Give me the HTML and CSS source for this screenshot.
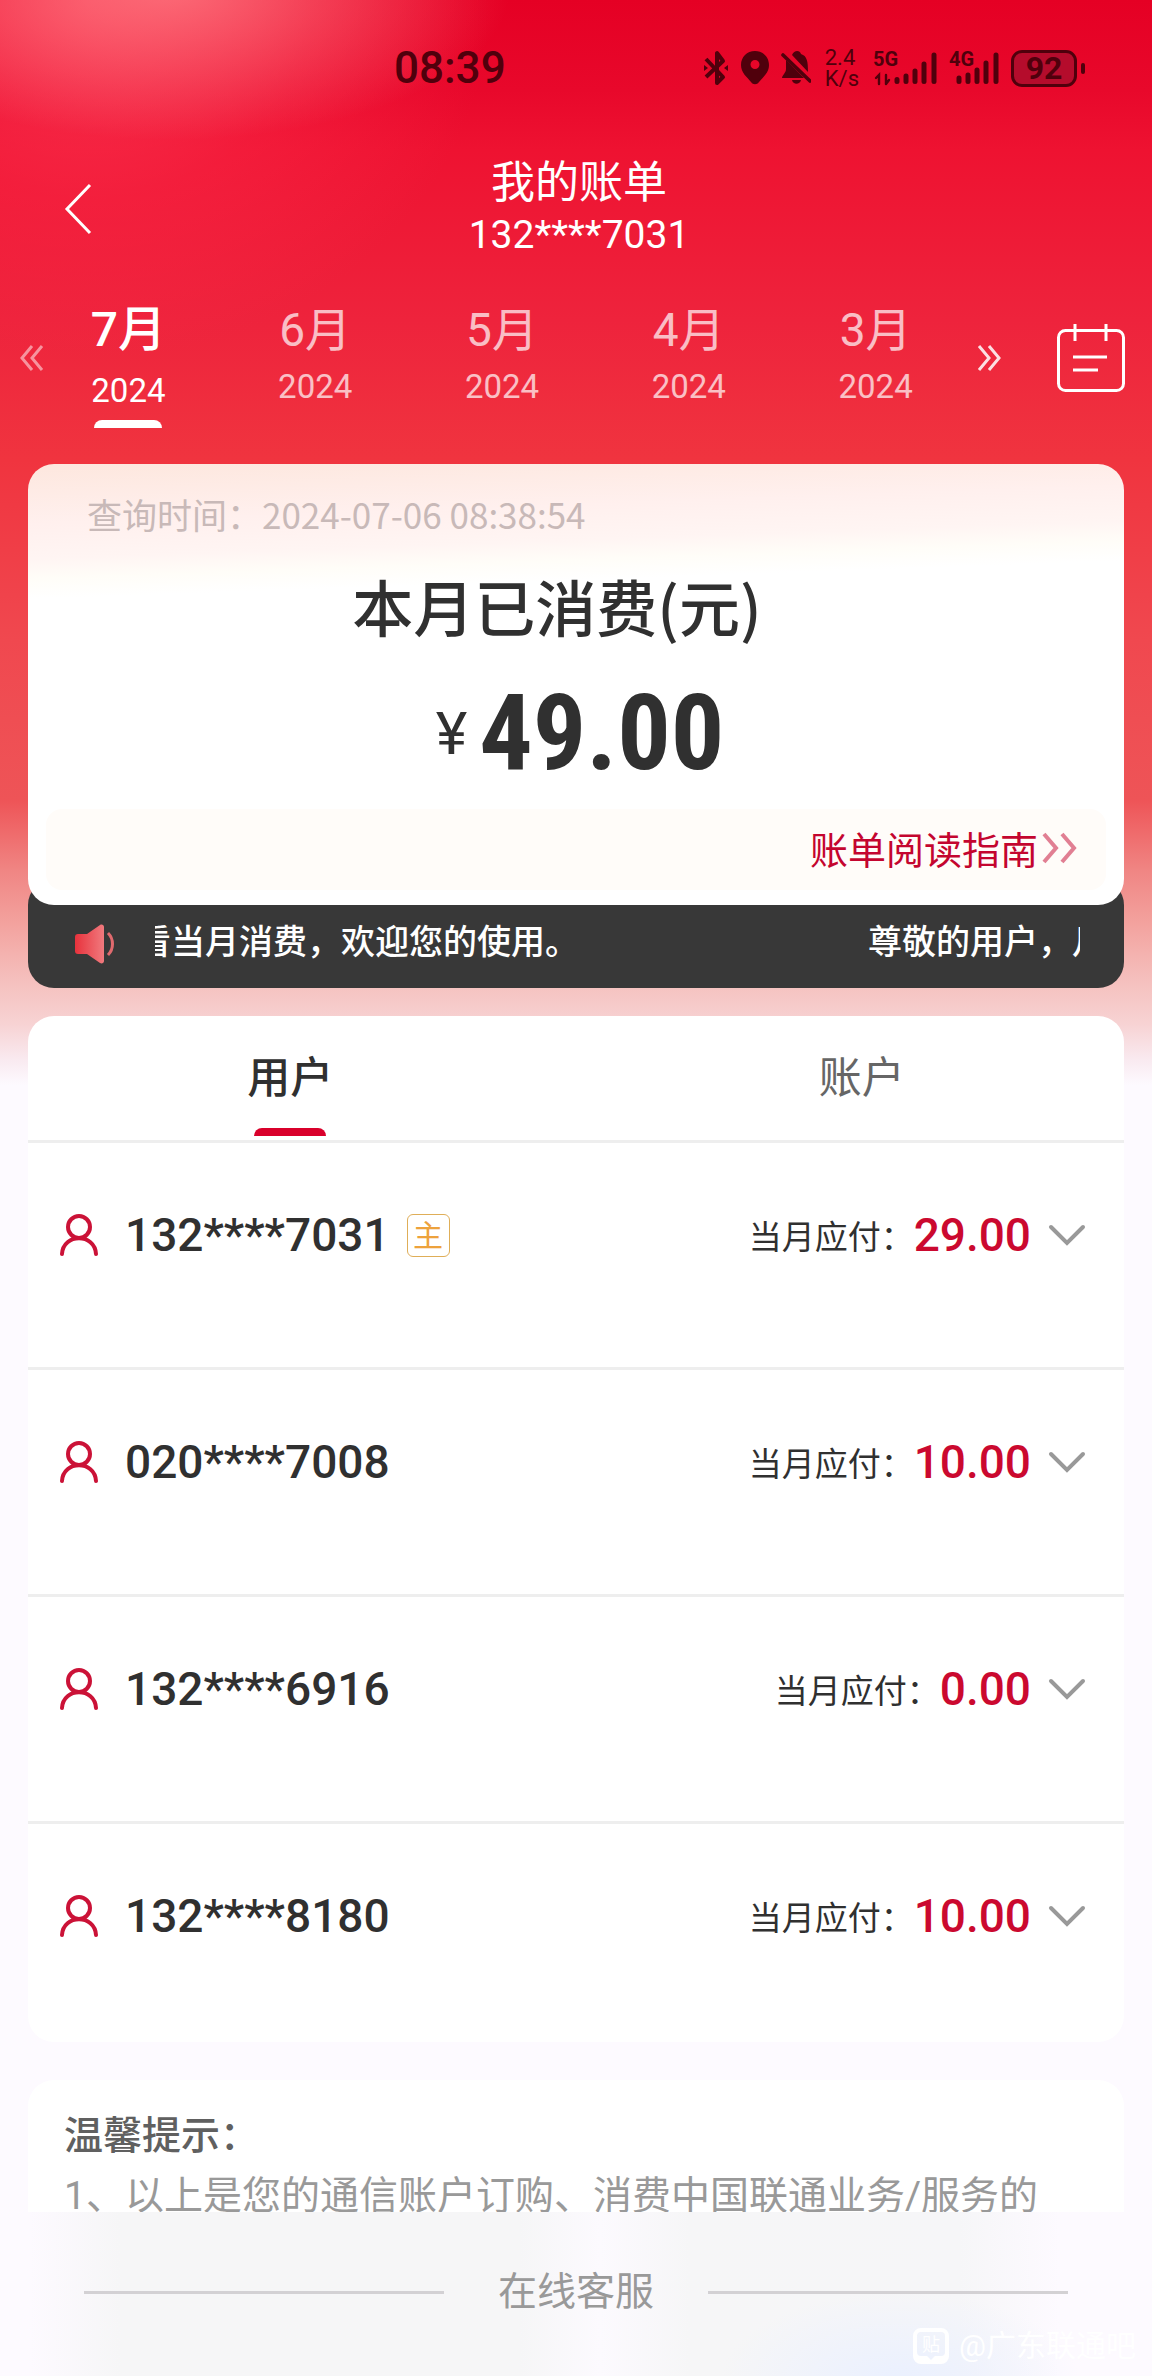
FILE: index.html
```html
<!DOCTYPE html>
<html lang="zh-CN">
<head>
<meta charset="utf-8">
<meta name="viewport" content="width=device-width, initial-scale=1">
<title>我的账单</title>
<link rel="stylesheet" href="styles.css">
</head>
<body>
<svg class="defs" aria-hidden="true">
  <symbol id="user" viewBox="0 0 38 42"><circle cx="19" cy="13" r="11"/><path d="M2 40C3 19 35 19 36 40"/></symbol>
  <symbol id="down" viewBox="0 0 38 22"><path d="M3 3l16 16L35 3"/></symbol>
</svg>
<div class="page">
  <div class="status">
    <span class="clock">08:39</span>
    <div class="status-icons">
      <svg width="26" height="36" viewBox="0 0 26 36" fill="none" stroke="currentColor" stroke-width="4" stroke-linejoin="round"><path d="M3 27L20 11l-6-8v30l6-6L3 9"/><path d="M1 15v6l4-3zM25 15v6l-4-3z" fill="currentColor" stroke="none"/></svg>
      <svg width="28" height="34" viewBox="0 0 28 34" fill="currentColor"><path fill-rule="evenodd" d="M14 0C6 0 0 6 0 14c0 8 6 12 10 17 2 3 6 3 8 0 4-5 10-9 10-17C28 6 22 0 14 0zm0 9a4.500 4.500 0 1 1 0 9 4.500 4.500 0 0 1 0-9z"/></svg>
      <svg width="30" height="34" viewBox="0 0 30 34" fill="currentColor"><path d="M11 4C13-1 19-1 20 3c6 2 7 7 7 18zM5 9l18 18H1c0-3 4-5 4-9zM11 29h9c-1 5-8 5-9 0z"/><path d="M2 4l27 26" stroke="currentColor" stroke-width="3.600" stroke-linecap="round"/></svg>
      <span class="speed">2.4<br>K/s</span>
      <span class="signal"><span class="net">5G</span><svg width="64" height="36" viewBox="0 0 64 36" fill="none" stroke="currentColor" stroke-width="5" stroke-linecap="round"><path d="M24 29.500v2M33 26v5.500M42 21v10.500M51 14v17.500M61 5v26.500"/><path d="M3 28l3-3v9M13 34v-9M13 34l3-4" stroke-width="2.400"/></svg></span>
      <span class="signal"><span class="net">4G</span><svg width="50" height="36" viewBox="0 0 50 36" fill="none" stroke="currentColor" stroke-width="5" stroke-linecap="round"><path d="M10 28v3.500M19 25v6.500M28 20v11.500M37 13v18.500M47 5v26.500"/></svg></span>
      <span class="battery">92</span>
    </div>
  </div>

  <header class="nav">
    <button class="icon-btn back" aria-label="返回"><svg width="28" height="52" viewBox="0 0 28 52" fill="none" stroke="currentColor" stroke-width="3"><path d="M26 2L3 26l23 24"/></svg></button>
    <div class="nav-title"><h1>我的账单</h1><p>132****7031</p></div>
  </header>

  <nav class="months">
    <button class="icon-btn prev" aria-label="更晚月份"><svg width="24" height="28" viewBox="0 0 24 28" fill="none" stroke="currentColor" stroke-width="3"><path d="M12 2L2 14l10 12M22 2L12 14l10 12"/></svg></button>
    <div class="month-list">
      <button class="month active"><b>7月</b><span>2024</span></button>
      <button class="month"><b>6月</b><span>2024</span></button>
      <button class="month"><b>5月</b><span>2024</span></button>
      <button class="month"><b>4月</b><span>2024</span></button>
      <button class="month"><b>3月</b><span>2024</span></button>
    </div>
    <button class="icon-btn next" aria-label="更早月份"><svg width="24" height="28" viewBox="0 0 24 28" fill="none" stroke="currentColor" stroke-width="3"><path d="M2 2l10 12L2 26M12 2l10 12-10 12"/></svg></button>
    <button class="icon-btn calendar" aria-label="选择月份"><svg width="68" height="68" viewBox="0 0 68 68" fill="none" stroke="currentColor" stroke-width="3"><rect x="1.500" y="6.500" width="65" height="60" rx="7"/><path d="M18 0v17M49 0v17M16 33h34M16 46h25"/></svg></button>
  </nav>

  <main>
    <section class="hero">
      <p class="query">查询时间：2024-07-06 08:38:54</p>
      <h2>本月已消费(元)</h2>
      <p class="total"><span class="yen">¥</span><strong>49.00</strong></p>
      <a class="guide" href="#tips">账单阅读指南<svg width="36" height="32" viewBox="0 0 36 32" fill="none" stroke="currentColor" stroke-width="4"><path d="M2 2l12 14L2 30M20 2l12 14-12 14"/></svg></a>
    </section>
    <div class="notice">
      <svg width="40" height="42" viewBox="0 0 40 42"><defs><linearGradient id="horn"><stop offset="0" stop-color="#e8323c"/><stop offset="1" stop-color="#f07a7e"/></linearGradient></defs><path d="M3 11h9L25 2c2-1 4 0 4 2v34c0 2-2 3-4 2L12 31H3c-2 0-3-1-3-3V14c0-2 1-3 3-3z" fill="url(#horn)"/><path d="M33 10c6 6 6 16 0 22" fill="none" stroke="#e06a6e" stroke-width="3"/></svg>
      <div class="marquee"><div class="marquee-track"><span>看当月消费，欢迎您的使用。</span><span>尊敬的用户，月</span></div></div>
    </div>

    <section class="card">
      <div class="tabs"><button class="tab active">用户</button><button class="tab">账户</button></div>
      <ul class="bills">
        <li><svg class="user"><use href="#user"/></svg><span class="phone">132****7031</span><span class="badge">主</span><span class="label">当月应付：</span><strong>29.00</strong><button class="icon-btn" aria-label="展开"><svg class="down"><use href="#down"/></svg></button></li>
        <li><svg class="user"><use href="#user"/></svg><span class="phone">020****7008</span><span class="label">当月应付：</span><strong>10.00</strong><button class="icon-btn" aria-label="展开"><svg class="down"><use href="#down"/></svg></button></li>
        <li><svg class="user"><use href="#user"/></svg><span class="phone">132****6916</span><span class="label">当月应付：</span><strong>0.00</strong><button class="icon-btn" aria-label="展开"><svg class="down"><use href="#down"/></svg></button></li>
        <li><svg class="user"><use href="#user"/></svg><span class="phone">132****8180</span><span class="label">当月应付：</span><strong>10.00</strong><button class="icon-btn" aria-label="展开"><svg class="down"><use href="#down"/></svg></button></li>
      </ul>
    </section>

    <section class="card tips" id="tips">
      <h3>温馨提示：</h3>
      <p>1、以上是您的通信账户订购、消费中国联通业务/服务的</p>
    </section>
  </main>
</div>

<footer class="service">
  <a href="#service">在线客服</a>
  <div class="watermark"><svg width="36" height="36" viewBox="0 0 36 36"><path fill="#fff" fill-rule="evenodd" d="M8 0h20a8 8 0 0 1 8 8v20a8 8 0 0 1-8 8H8a8 8 0 0 1-8-8V8a8 8 0 0 1 8-8zm0 4a4 4 0 0 0-4 4v16a4 4 0 0 0 4 4h6l4 4 4-4h6a4 4 0 0 0 4-4V8a4 4 0 0 0-4-4z"/><text x="9" y="23" font-size="18" fill="#fff">贴</text></svg><span>@广东联通吧</span></div>
</footer>
</body>
</html>
```
FILE: styles.css
```css
* { box-sizing: border-box; margin: 0; padding: 0; }
body {
  background: #fdfaff;
  color: #303030;
  font-family: Roboto, "Noto Sans CJK SC", sans-serif;
}
button { border: 0; background: none; color: inherit; font: inherit; }
a { color: inherit; text-decoration: none; }
ul { list-style: none; }
svg { display: block; flex: none; }
.defs { position: absolute; width: 0; height: 0; }

.page {
  padding-bottom: 60px;
  background:
    radial-gradient(ellipse 340px 150px at 170px -10px, rgba(255, 135, 140, .7), transparent),
    radial-gradient(ellipse 400px 360px at 90px 0, rgba(255, 70, 95, .7), rgba(255, 50, 80, .3) 55%, transparent),
    linear-gradient(#e50024, #e8082b 90px, #ee1231 150px, #ee233c 320px, #f0343f 460px, #f0484f 640px, #ee5457 800px, #f08583 870px, #f3a39f 925px, #f5c2c0 985px, #f7d3d4 1025px, #f9eaf0 1060px, #fdfaff 1085px);
}
.icon-btn { display: flex; align-items: center; justify-content: center; }

.status {
  display: flex;
  align-items: center;
  justify-content: space-between;
  height: 136px;
  padding: 0 75px 0 394px;
  color: #50000c;
}
.clock { font-size: 44px; font-weight: 500; }
.status-icons { display: flex; align-items: center; gap: 12px; }
.speed { margin: 0 2px; font-size: 22px; line-height: 21px; }
.signal { position: relative; }
.net { position: absolute; left: 0; top: -1px; font-size: 20px; font-weight: 700; line-height: 20px; }
.battery {
  position: relative;
  width: 66px;
  border: 3px solid;
  border-radius: 11px;
  background: #b50c2c;
  font-size: 32px;
  font-weight: 700;
  line-height: 31px;
  text-align: center;
}
.battery::after {
  content: "";
  position: absolute;
  right: -11px;
  top: 10px;
  width: 4px;
  height: 11px;
  border-radius: 2px;
  background: currentColor;
}

.nav {
  display: grid;
  grid-template-columns: 1fr auto 1fr;
  align-items: center;
  padding: 21px 58px 0 64px;
  color: #fff;
  text-align: center;
}
.back { justify-self: start; }
.nav h1 { font-size: 44px; font-weight: 400; line-height: 52px; }
.nav p { font-size: 39px; line-height: 52px; }

.months {
  display: flex;
  align-items: center;
  height: 116px;
  margin-top: 39px;
  padding: 0 27px 0 20px;
  color: #fff;
}
.prev { margin-right: -9px; opacity: .5; }
.next { margin-left: 8px; opacity: .85; }
.calendar { margin-left: 56px; }
.month-list { display: grid; grid-template-columns: repeat(5, 1fr); flex: 1; height: 100%; }
.month { position: relative; display: flex; flex-direction: column; align-items: center; gap: 5px; opacity: .7; }
.month b { font-size: 46px; font-weight: 400; line-height: 60px; }
.month span { font-size: 33px; line-height: 44px; }
.month.active { gap: 9px; opacity: 1; }
.month.active b { font-size: 48px; font-weight: 500; }
.month.active::after {
  content: "";
  position: absolute;
  bottom: -12px;
  width: 68px;
  height: 8px;
  border-radius: 8px 8px 0 0;
  background: #fff;
}

main { padding: 48px 28px 0; }
.hero {
  position: relative;
  padding: 28px 18px 15px;
  border-radius: 26px;
  background: linear-gradient(178deg, #fde7de, #fff0ee 60px, #fff5f3 95px, #fffdf8 115px, #fff 135px) #fff;
  text-align: center;
}
.query { padding-left: 41px; color: #c8b9b8; font-family: "Noto Sans CJK SC", sans-serif; font-size: 35px; line-height: 44px; text-align: left; white-space: nowrap; }
.hero h2 { margin: 34px 38px 0 0; font-family: "Noto Sans CJK SC", sans-serif; font-size: 61px; font-weight: 500; line-height: 72px; }
.total { display: flex; align-items: center; justify-content: center; gap: 12px; height: 100px; margin-top: 41px; padding-left: 8px; }
.yen { font-size: 60px; }
.total strong { font-family: "Roboto Condensed", "Liberation Sans Narrow", Roboto, sans-serif; font-size: 106px; line-height: 100px; }
.guide {
  display: flex;
  align-items: center;
  justify-content: flex-end;
  gap: 4px;
  height: 81px;
  margin-top: 26px;
  padding: 0 28px 4px 0;
  border-radius: 16px;
  background: #fffcf9;
  color: #c4052f;
  font-size: 38px;
}
.guide svg { opacity: .5; }

.notice {
  display: flex;
  align-items: center;
  gap: 40px;
  height: 109px;
  margin-top: -26px;
  padding: 26px 44px 5px 47px;
  border-radius: 26px;
  background: #383838;
  color: #fff;
}
.marquee { flex: 1; overflow: hidden; font-size: 34px; font-weight: 500; line-height: 48px; white-space: nowrap; }
.marquee-track { display: flex; gap: 289px; margin-left: -18px; padding-bottom: 4px; }

.card { margin-top: 28px; border-radius: 26px; background: #fff; }
.tabs { display: flex; justify-content: space-between; padding: 0 20%; border-bottom: 3px solid #eee; }
.tab { position: relative; height: 124px; padding-bottom: 9px; color: #666; font-size: 43px; }
.tab.active { color: #303030; font-weight: 500; }
.tab.active::after {
  content: "";
  position: absolute;
  left: 50%;
  bottom: 4px;
  width: 72px;
  height: 8px;
  margin-left: -36px;
  border-radius: 8px 8px 0 0;
  background: #d9002b;
}
.bills li {
  display: flex;
  align-items: center;
  height: 227px;
  padding: 0 38px 40px 32px;
  border-bottom: 3px solid #eee;
}
.bills li:last-child { height: 218px; padding-bottom: 34px; border: 0; }
.user { width: 38px; height: 42px; fill: none; stroke: #cb1237; stroke-width: 4; stroke-linecap: round; }
.phone { margin-left: 27px; font-size: 46px; font-weight: 500; }
.badge {
  width: 43px;
  margin-left: 17px;
  border: 1px solid #dfae58;
  border-radius: 6px;
  color: #eda23c;
  font-size: 30px;
  line-height: 41px;
  text-align: center;
}
.label { margin-left: auto; font-size: 33px; }
.bills strong { color: #cb092f; font-size: 46px; font-weight: 500; }
.down { width: 38px; height: 22px; margin-left: 17px; fill: none; stroke: #999; stroke-width: 4; stroke-linecap: round; }

.tips { margin-top: 38px; padding: 26px 36px 90px; font-size: 39px; line-height: 60px; white-space: nowrap; overflow: hidden; }
.tips h3 { color: #606060; font-size: 39px; font-weight: 500; }
.tips p { color: #999; }

.service {
  position: fixed;
  left: 0;
  right: 0;
  bottom: 0;
  height: 164px;
  padding: 54px 84px 0;
  background:
    radial-gradient(ellipse 180px 90px at 900px 170px, #eaf0ff, transparent),
    linear-gradient(90deg, #fdfaff 30px, #f6f6f7 120px, #f6f6f7 520px, #fcfafe 600px, #f6f6f7 690px, #f6f6f8 960px, #fdfaff 1060px);
  color: #999;
  font-size: 39px;
}
.service a { display: flex; align-items: center; gap: 54px; line-height: 52px; }
.service a::before, .service a::after { content: ""; flex: 1; height: 3px; background: #d3d1d4; }
.watermark { display: flex; align-items: center; justify-content: flex-end; gap: 10px; margin: 8px -68px 0 0; color: #fff; font-size: 30px; line-height: 40px; }
```
